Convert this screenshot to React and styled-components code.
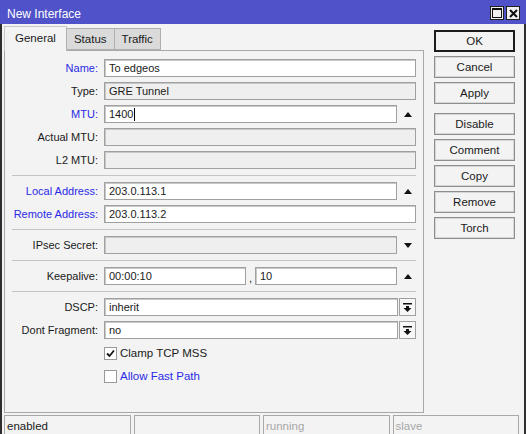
import React from "react";
import styled, { createGlobalStyle } from "styled-components";

const GlobalStyle = createGlobalStyle`
  html, body {
    margin: 0;
    padding: 0;
    height: 100%;
    overflow: hidden;
    background: #f3f3f3;
  }
  #root {
    height: 100%;
  }
`;

const Window = styled.div`
  height: 100vh;
  display: flex;
  flex-direction: column;
  background: #f3f3f3;
  border-left: 2px solid #2e2e2e;
  border-right: 2px solid #2e2e2e;
  box-sizing: border-box;
  font-family: "Liberation Sans", Arial, sans-serif;
  font-size: 11px;
  color: #1a1a1a;
`;

const TitleBar = styled.div`
  height: 24px;
  margin: 0 -2px;
  flex: none;
  display: flex;
  align-items: center;
  justify-content: space-between;
  background: #4f52c8;
  color: #fff;
  padding: 0 6px 0 7px;
`;

const Title = styled.span`
  font-size: 12px;
  padding-top: 3px;
`;

const TitleButtons = styled.div`
  display: flex;
  gap: 2px;
  margin-top: 2px;
`;

const TitleButton = styled.div`
  width: 14px;
  height: 14px;
  box-sizing: border-box;
  background: #f0f0f0;
  border: 1px solid #202020;
  display: flex;
  align-items: center;
  justify-content: center;
`;

const Main = styled.div`
  flex: 1;
  display: flex;
  gap: 10px;
  padding: 2px 0 0 2px;
  min-height: 0;
`;

const LeftCol = styled.div`
  width: 420px;
  display: flex;
  flex-direction: column;
`;

const TabStrip = styled.div`
  height: 24px;
  display: flex;
  align-items: flex-end;
  flex: none;
  position: relative;
  z-index: 1;
`;

const Tab = styled.div`
  box-sizing: border-box;
  height: ${(p) => (p.$active ? "25px" : "22px")};
  margin-bottom: ${(p) => (p.$active ? "-1px" : "0")};
  padding: ${(p) => (p.$active ? "0 10px 2px" : "0 7px")};
  display: flex;
  align-items: center;
  background: ${(p) => (p.$active ? "#f3f3f3" : "#dadada")};
  border: 1px solid ${(p) => (p.$active ? "#c8c8c8" : "#b0b0b0")};
  border-bottom: ${(p) => (p.$active ? "none" : "1px solid #b0b0b0")};
  margin-left: ${(p) => (p.$active ? "0" : "-1px")};
  font-size: 11.5px;
`;

const Panel = styled.div`
  flex: 1;
  box-sizing: border-box;
  border: 1px solid #a8a8a8;
  padding: 8px 7px 0 0;
  display: flex;
  flex-direction: column;
  gap: 5px;
`;

const Row = styled.div`
  display: flex;
  align-items: center;
  height: 18px;
`;

const Label = styled.div`
  width: 94px;
  flex: none;
  margin-right: 5px;
  padding-right: 1px;
  box-sizing: border-box;
  text-align: right;
  white-space: nowrap;
  color: ${(p) => (p.$blue ? "#2a2ae6" : "#1a1a1a")};
`;

const Field = styled.div`
  flex: 1;
  height: 18px;
  box-sizing: border-box;
  border: 1px solid #a0a0a0;
  box-shadow: inset 1px 1px 0 #c8c8c8;
  background: ${(p) => (p.$disabled ? "#efefef" : "#ffffff")};
  padding: 0 4px;
  display: flex;
  align-items: center;
  white-space: nowrap;
  overflow: hidden;
`;

const Caret = styled.span`
  display: inline-block;
  width: 1px;
  height: 13px;
  background: #000;
  margin-left: 1px;
`;

const ArrowSlot = styled.div`
  width: 17px;
  flex: none;
  display: flex;
  align-items: center;
  justify-content: center;
  padding-left: 2px;
`;

const DropButton = styled.div`
  width: 17px;
  height: 18px;
  flex: none;
  box-sizing: border-box;
  margin-left: 1px;
  border: 1px solid #a0a0a0;
  background: #f7f7f7;
  display: flex;
  align-items: center;
  justify-content: center;
`;

const Comma = styled.div`
  width: 9px;
  flex: none;
  text-align: center;
  padding-top: 3px;
`;

const Separator = styled.div`
  height: 1px;
  background: #c4c4c4;
  margin: 1px 0 1px 7px;
  flex: none;
`;

const CheckRow = styled.label`
  display: flex;
  align-items: center;
  height: 18px;
  padding-left: 99px;
  gap: 3px;
  color: ${(p) => (p.$blue ? "#2a2ae6" : "#1a1a1a")};
  font-size: 11.5px;
`;

const CheckBox = styled.div`
  width: 13px;
  height: 13px;
  box-sizing: border-box;
  border: 1px solid #9a9a9a;
  background: #fff;
  display: flex;
  align-items: center;
  justify-content: center;
`;

const ButtonCol = styled.div`
  width: 81px;
  margin-top: 4px;
  display: flex;
  flex-direction: column;
  gap: 4px;
`;

const Button = styled.div`
  height: 22px;
  box-sizing: border-box;
  border: ${(p) => (p.$default ? "2px solid #1c1c1c" : "1px solid #8e8e8e")};
  box-shadow: ${(p) => (p.$default ? "none" : "inset 0 0 0 1px #d6d6d6")};
  background: #f3f3f3;
  display: flex;
  align-items: center;
  justify-content: center;
  font-size: 11.5px;
  margin-top: ${(p) => (p.$spaced ? "5px" : "0")};
`;

const StatusBar = styled.div`
  height: 19px;
  flex: none;
  margin-top: 2px;
  padding: 0 5px 0 2px;
  display: grid;
  grid-template-columns: repeat(4, 1fr);
  gap: 3px;
`;

const StatusCell = styled.div`
  box-sizing: border-box;
  border: 1px solid #a8a8a8;
  border-bottom: none;
  padding: 4px 0 0 2px;
  color: ${(p) => (p.$dim ? "#a8a8a8" : "#1a1a1a")};
  font-size: 11.5px;
`;

const UpArrow = () => (
  <svg width="8" height="5" viewBox="0 0 8 5">
    <polygon points="0,5 8,5 4,0" fill="#111" />
  </svg>
);

const DownArrow = () => (
  <svg width="8" height="5" viewBox="0 0 8 5">
    <polygon points="0,0 8,0 4,5" fill="#111" />
  </svg>
);

const DropIcon = () => (
  <svg width="9" height="9" viewBox="0 0 9 9">
    <rect x="0" y="0" width="9" height="1.5" fill="#111" />
    <rect x="3" y="3" width="3" height="2" fill="#111" />
    <polygon points="0.5,5 8.5,5 4.5,9" fill="#111" />
  </svg>
);

const CheckMark = () => (
  <svg width="9" height="9" viewBox="0 0 9 9">
    <polyline
      points="1,4.5 3.5,7 8,1.5"
      fill="none"
      stroke="#111"
      strokeWidth="1.8"
    />
  </svg>
);

const App = () => {
  return (
    <>
      <GlobalStyle />
      <Window>
        <TitleBar>
          <Title>New Interface</Title>
          <TitleButtons>
            <TitleButton>
              <svg width="10" height="10" viewBox="0 0 10 10">
                <rect x="0.5" y="0.5" width="9" height="9" fill="none" stroke="#111" />
                <rect x="0" y="0" width="10" height="2" fill="#111" />
              </svg>
            </TitleButton>
            <TitleButton>
              <svg width="9" height="9" viewBox="0 0 9 9">
                <path d="M1 1 L8 8 M8 1 L1 8" stroke="#111" strokeWidth="2" />
              </svg>
            </TitleButton>
          </TitleButtons>
        </TitleBar>
        <Main>
          <LeftCol>
            <TabStrip>
              <Tab $active>General</Tab>
              <Tab>Status</Tab>
              <Tab>Traffic</Tab>
            </TabStrip>
            <Panel>
              <Row>
                <Label $blue>Name:</Label>
                <Field>To edgeos</Field>
              </Row>
              <Row>
                <Label>Type:</Label>
                <Field $disabled>GRE Tunnel</Field>
              </Row>
              <Row>
                <Label $blue>MTU:</Label>
                <Field>
                  1400
                  <Caret />
                </Field>
                <ArrowSlot>
                  <UpArrow />
                </ArrowSlot>
              </Row>
              <Row>
                <Label>Actual MTU:</Label>
                <Field $disabled />
              </Row>
              <Row>
                <Label>L2 MTU:</Label>
                <Field $disabled />
              </Row>
              <Separator />
              <Row>
                <Label $blue>Local Address:</Label>
                <Field>203.0.113.1</Field>
                <ArrowSlot>
                  <UpArrow />
                </ArrowSlot>
              </Row>
              <Row>
                <Label $blue>Remote Address:</Label>
                <Field>203.0.113.2</Field>
              </Row>
              <Separator />
              <Row>
                <Label>IPsec Secret:</Label>
                <Field $disabled />
                <ArrowSlot>
                  <DownArrow />
                </ArrowSlot>
              </Row>
              <Separator />
              <Row>
                <Label>Keepalive:</Label>
                <Field>00:00:10</Field>
                <Comma>,</Comma>
                <Field>10</Field>
                <ArrowSlot>
                  <UpArrow />
                </ArrowSlot>
              </Row>
              <Separator />
              <Row>
                <Label>DSCP:</Label>
                <Field>inherit</Field>
                <DropButton>
                  <DropIcon />
                </DropButton>
              </Row>
              <Row>
                <Label>Dont Fragment:</Label>
                <Field>no</Field>
                <DropButton>
                  <DropIcon />
                </DropButton>
              </Row>
              <CheckRow>
                <CheckBox>
                  <CheckMark />
                </CheckBox>
                Clamp TCP MSS
              </CheckRow>
              <CheckRow $blue>
                <CheckBox />
                Allow Fast Path
              </CheckRow>
            </Panel>
          </LeftCol>
          <ButtonCol>
            <Button $default>OK</Button>
            <Button>Cancel</Button>
            <Button>Apply</Button>
            <Button $spaced>Disable</Button>
            <Button>Comment</Button>
            <Button>Copy</Button>
            <Button>Remove</Button>
            <Button>Torch</Button>
          </ButtonCol>
        </Main>
        <StatusBar>
          <StatusCell>enabled</StatusCell>
          <StatusCell />
          <StatusCell $dim>running</StatusCell>
          <StatusCell $dim>slave</StatusCell>
        </StatusBar>
      </Window>
    </>
  );
};

export default App;
